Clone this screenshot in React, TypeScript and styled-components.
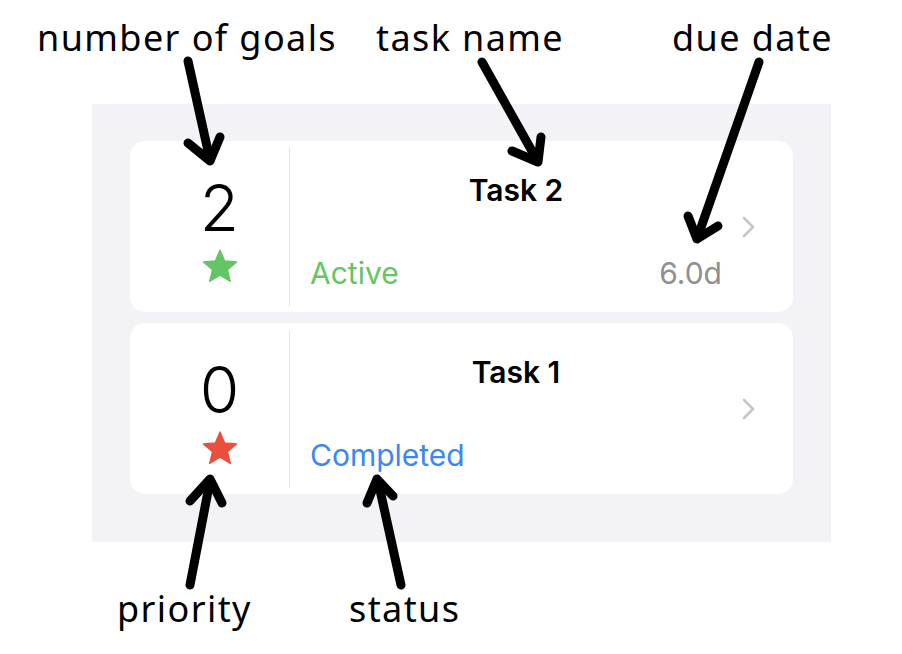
import React from 'react';
import styled, { createGlobalStyle } from 'styled-components';

const GlobalStyle = createGlobalStyle`
  html, body {
    margin: 0;
    padding: 0;
    background: #ffffff;
  }
`;

const Page = styled.div`
  position: relative;
  width: 902px;
  height: 654px;
  padding: 104px 0 0 92px;
  box-sizing: border-box;
  overflow: hidden;
  font-family: Inter, 'Noto Sans', sans-serif;
`;

const Panel = styled.div`
  width: 739px;
  background: #f2f2f7;
  padding: 37px 38px 48px;
  box-sizing: border-box;
  display: flex;
  flex-direction: column;
  gap: 11px;
`;

const Card = styled.div`
  display: flex;
  align-items: stretch;
  height: 171px;
  background: #ffffff;
  border-radius: 15px;
`;

const GoalsCol = styled.div`
  width: 159px;
  padding-left: 20px;
  box-sizing: border-box;
  display: flex;
  flex-direction: column;
  align-items: center;
  padding-top: 35px;
`;

const GoalCount = styled.div`
  font-size: 64px;
  font-weight: 300;
  line-height: 1;
  color: #000;
  height: 64px;
`;

const StarIcon = styled.svg`
  margin-top: 8px;
  width: 38px;
  height: 36px;
`;

const Divider = styled.div`
  width: 1px;
  margin: 7px 0 6px;
  background: #e3e3e8;
`;

const Body = styled.div`
  flex: 1;
  display: flex;
  flex-direction: column;
  justify-content: space-between;
  padding: 32px 20px 21px;
`;

const Title = styled.div`
  text-align: center;
  font-size: 30px;
  font-weight: 600;
  line-height: 34px;
  color: #000;
`;

const Meta = styled.div`
  display: flex;
  justify-content: space-between;
  align-items: baseline;
  font-size: 30px;
  line-height: 36px;
`;

const Status = styled.span<{ $tone: string }>`
  color: ${p => p.$tone};
`;

const Due = styled.span`
  color: #8e8e93;
`;

const ChevronCol = styled.div`
  width: 14px;
  margin-right: 37px;
  display: flex;
  align-items: center;
`;

const Label = styled.div<{ $x: number; $y: number }>`
  position: absolute;
  left: ${p => p.$x}px;
  top: ${p => p.$y}px;
  font-family: 'Noto Sans', 'Open Sans', sans-serif;
  font-size: 36px;
  letter-spacing: 1.4px;
  line-height: 1;
  color: #000;
  white-space: nowrap;
`;

const Arrows = styled.svg`
  position: absolute;
  left: 0;
  top: 0;
  width: 902px;
  height: 654px;
  pointer-events: none;
`;

type Task = {
  goals: number;
  priority: string;
  name: string;
  status: string;
  statusColor: string;
  due?: string;
};

const tasks: Task[] = [
  { goals: 2, priority: '#63c564', name: 'Task 2', status: 'Active', statusColor: '#63c564', due: '6.0d' },
  { goals: 0, priority: '#ea4e3d', name: 'Task 1', status: 'Completed', statusColor: '#3a87f5' },
];

const Star = ({ color }: { color: string }) => (
  <StarIcon viewBox="0 0 24 23">
    <polygon
      points="12,1.2 15,8.3 22.6,8.9 16.8,13.9 18.6,21.4 12,17.4 5.4,21.4 7.2,13.9 1.4,8.9 9,8.3"
      fill={color}
      stroke={color}
      strokeWidth="0.8"
      strokeLinejoin="round"
    />
  </StarIcon>
);

const Chevron = () => (
  <svg width="14" height="22" viewBox="0 0 14 22">
    <path d="M2 2 L11 11 L2 20" fill="none" stroke="#c6c6c9" strokeWidth="2.6" strokeLinecap="round" strokeLinejoin="round" />
  </svg>
);

const arrows = [
  { line: 'M188 61 L210 160', head: 'M188 143 L210 161 L220 137' },
  { line: 'M482 62 L537 160', head: 'M512 151 L538 162 L541 137' },
  { line: 'M759 62 L698 236', head: 'M688 216 L697 239 L718 226' },
  { line: 'M190 585 L210 481', head: 'M190 501 L210 479 L222 503' },
  { line: 'M401 585 L378 481', head: 'M367 503 L377 479 L393 496' },
];

const App: React.FC = () => (
  <>
    <GlobalStyle />
    <Page>
      <Panel>
        {tasks.map(t => (
          <Card key={t.name}>
            <GoalsCol>
              <GoalCount>{t.goals}</GoalCount>
              <Star color={t.priority} />
            </GoalsCol>
            <Divider />
            <Body>
              <Title>{t.name}</Title>
              <Meta>
                <Status $tone={t.statusColor}>{t.status}</Status>
                {t.due && <Due>{t.due}</Due>}
              </Meta>
            </Body>
            <ChevronCol>
              <Chevron />
            </ChevronCol>
          </Card>
        ))}
      </Panel>

      <Label $x={37} $y={20}>number of goals</Label>
      <Label $x={376} $y={20}>task name</Label>
      <Label $x={672} $y={20}>due date</Label>
      <Label $x={117} $y={591}>priority</Label>
      <Label $x={349} $y={591}>status</Label>

      <Arrows viewBox="0 0 902 654">
        {arrows.map((a, i) => (
          <g key={i} fill="none" stroke="#000" strokeWidth="9" strokeLinecap="round" strokeLinejoin="round">
            <path d={a.line} />
            <path d={a.head} />
          </g>
        ))}
      </Arrows>
    </Page>
  </>
);

export default App;
